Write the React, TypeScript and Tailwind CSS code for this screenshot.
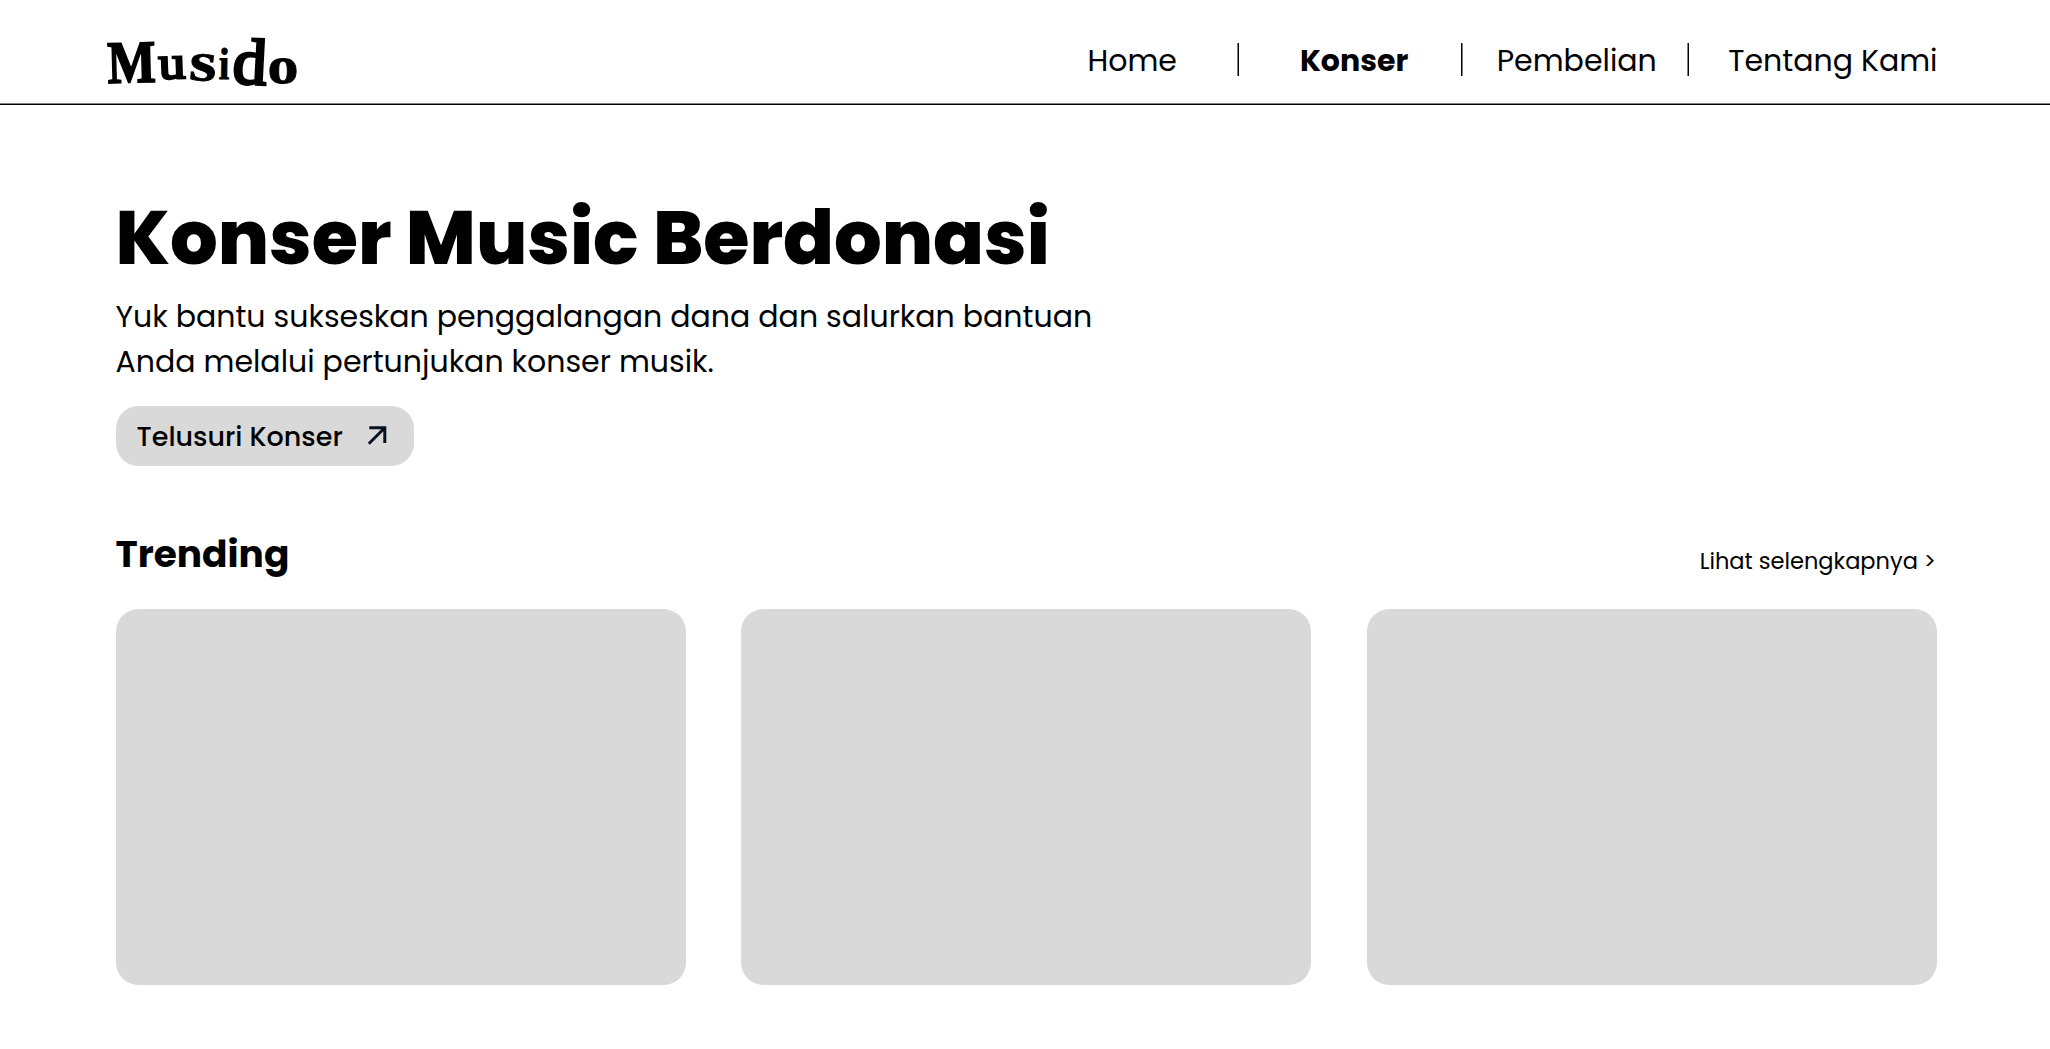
type Glyph = {
  char: string;
  x: number;
  y: number;
  size: number;
  sx: number;
  rotate: number;
  stroke: number;
  weight: number;
};

const logoGlyphs: Glyph[] = [
  { char: "M", x: 108, y: 83, size: 60, sx: 0.85, rotate: -1.5, stroke: 1.8, weight: 700 },
  { char: "u", x: 159, y: 79, size: 47, sx: 1.14, rotate: -2, stroke: 2.4, weight: 400 },
  { char: "s", x: 188.5, y: 79.5, size: 56, sx: 1.25, rotate: 4, stroke: 0.8, weight: 700 },
  { char: "i", x: 218.5, y: 79, size: 45, sx: 0.86, rotate: 1, stroke: 0.8, weight: 700 },
  { char: "d", x: 232, y: 83, size: 65, sx: 1.04, rotate: 3, stroke: 3, weight: 400 },
  { char: "o", x: 267.5, y: 83, size: 53, sx: 1.17, rotate: 0, stroke: 0.8, weight: 700 },
];

function Logo() {
  return (
    <svg width="240" height="103" viewBox="80 0 240 103" className="block" aria-label="Musido">
      {logoGlyphs.map((g) => (
        <text
          key={g.char}
          className="font-['Liberation_Serif',serif]"
          fontSize={g.size}
          fontWeight={g.weight}
          stroke="#000"
          strokeWidth={g.stroke}
          transform={`translate(${g.x} ${g.y}) rotate(${g.rotate}) scale(${g.sx} 1)`}
        >
          {g.char}
        </text>
      ))}
    </svg>
  );
}

function Separator({ flip = false }: { flip?: boolean }) {
  return (
    <span
      className={
        flip
          ? "mt-[5px] h-[33px] w-[2px] border-r border-l border-r-[#808080] border-l-black"
          : "mt-[5px] h-[33px] w-[2px] border-r border-l border-r-black border-l-[#808080]"
      }
    />
  );
}

function Header() {
  return (
    <header className="flex h-[104px] justify-between border-b border-[#808080] pl-[80px]">
      <Logo />
      <nav className="mr-[112.5px] flex pt-[38px] text-[30px] leading-[45px] whitespace-nowrap">
        <a className="mr-[60px]">Home</a>
        <Separator />
        <a className="mr-[53px] ml-[61px] font-bold">Konser</a>
        <Separator flip />
        <a className="mr-[30.5px] ml-[33.5px]">Pembelian</a>
        <Separator />
        <a className="ml-[39px]">Tentang Kami</a>
      </nav>
    </header>
  );
}

function ArrowUpRight() {
  return (
    <svg width="20" height="20" viewBox="0 0 20 20" fill="none" stroke="#06121f" strokeWidth="3" className="mb-[2px]">
      <path d="M2.3 2.8H17.8V18M17.8 2.8L1.8 18.8" />
    </svg>
  );
}

export default function App() {
  return (
    <div className="min-h-[1049px] w-[2050px] overflow-hidden bg-white font-['Poppins','Inter',sans-serif] text-black">
      <Header />
      <div className="h-px bg-black" />
      <main className="pr-[113.5px] pl-[115.5px]">
        <h1 className="mt-[76.5px] text-[75px] leading-[112.5px] font-extrabold">Konser Music Berdonasi</h1>
        <p className="w-[1000px] text-[30px] leading-[45px]">
          Yuk bantu sukseskan penggalangan dana dan salurkan bantuan
          <br />
          Anda melalui pertunjukan konser musik.
        </p>
        <button className="mt-[22px] flex h-[60px] w-[298.5px] items-center justify-between rounded-[22.5px] bg-[#d9d9d9] pr-[27px] pl-[21px] text-[27px] leading-[40px] font-medium">
          <span className="pt-[2px]">Telusuri Konser</span>
          <ArrowUpRight />
        </button>
        <div className="mt-[60px] flex items-end justify-between">
          <h2 className="text-[37.5px] leading-[56.25px] font-bold">Trending</h2>
          <a className="mr-[0.5px] mb-[4px] text-[22.5px] leading-[33.75px]">Lihat selengkapnya &gt;</a>
        </div>
        <div className="mt-[26.5px] grid grid-cols-3 gap-[55.5px]">
          <div className="h-[376.5px] rounded-[22.5px] bg-[#d9d9d9]" />
          <div className="h-[376.5px] rounded-[22.5px] bg-[#d9d9d9]" />
          <div className="h-[376.5px] rounded-[22.5px] bg-[#d9d9d9]" />
        </div>
      </main>
    </div>
  );
}
